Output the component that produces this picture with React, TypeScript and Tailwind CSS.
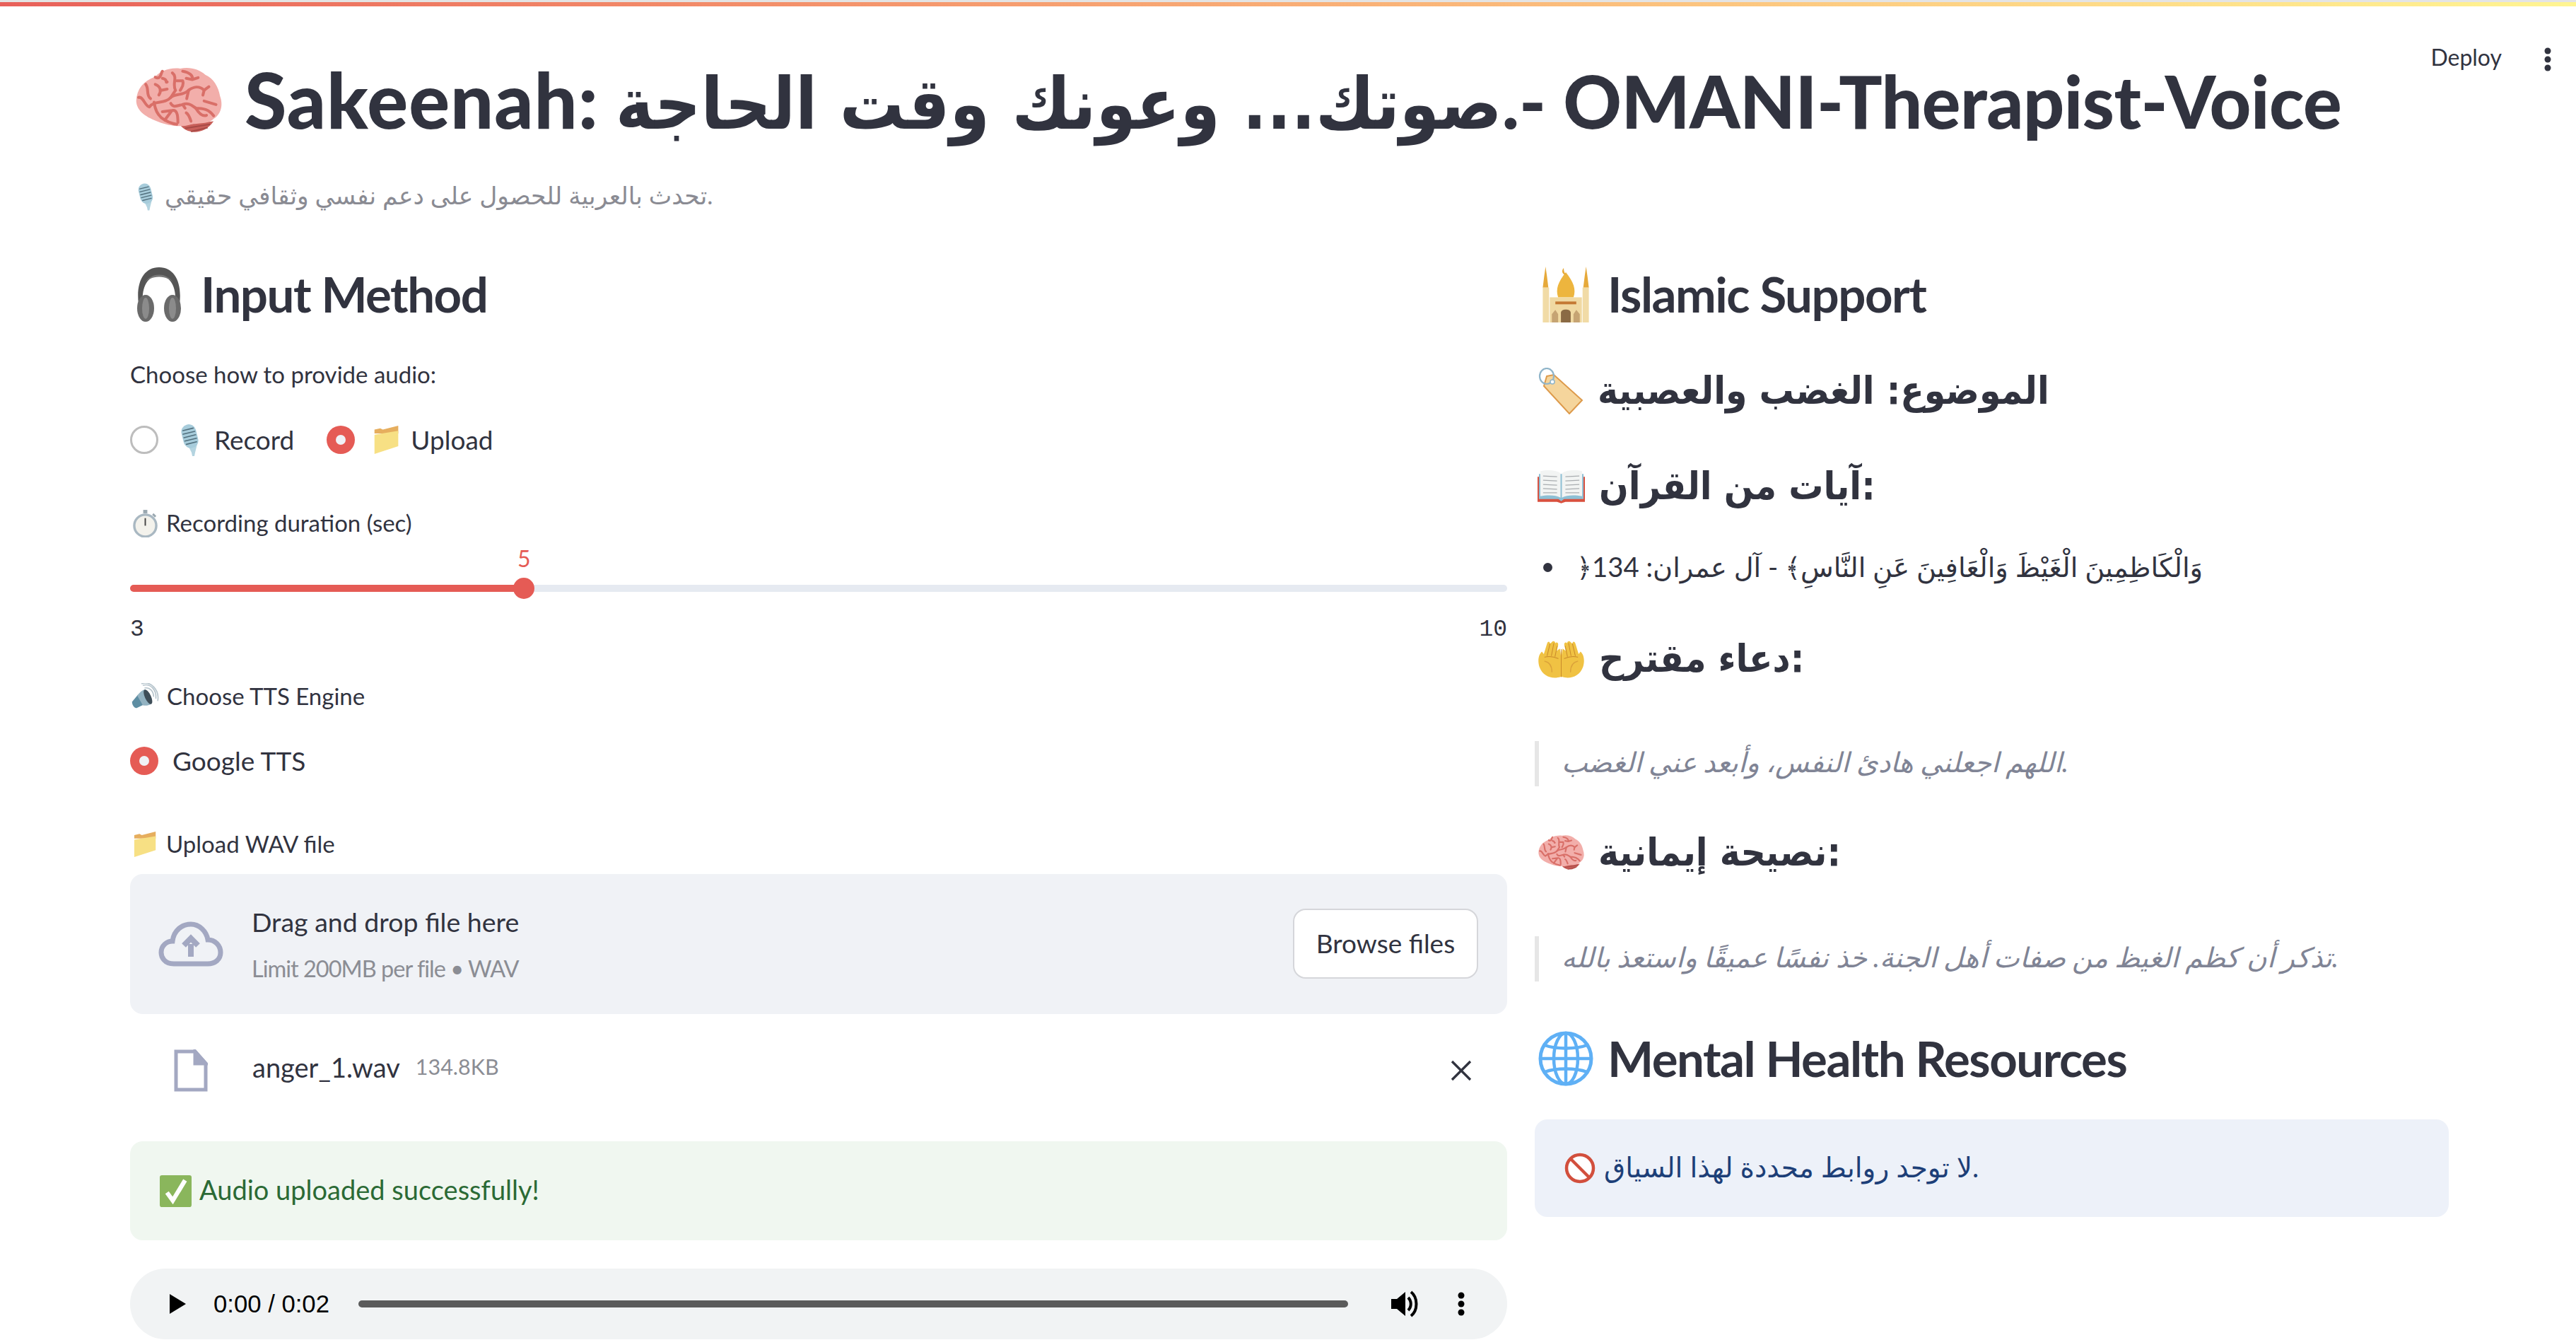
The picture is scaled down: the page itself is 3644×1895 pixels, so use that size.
const BrainIcon = ({ className }: { className: string }) => (
    <svg viewBox="18 28 362 282" className={className}>
        <path d="M205 270 C225 305 300 320 345 255Z" fill="#c9605a" />
        <path d="M225 285 L330 268 M250 298 L320 282" stroke="#a84a46" strokeWidth="6" />
        <path d="M20 170 C22 120 50 85 100 68 C120 45 160 28 205 34 C240 25 285 35 310 60 C345 75 365 110 372 150 C385 185 378 225 345 245 C320 270 270 262 245 270 C205 282 150 272 115 258 C65 240 22 215 20 170Z" fill="#f2aeaa" />
        <g fill="none" stroke="#d96f68" strokeWidth="12" strokeLinecap="round" strokeLinejoin="round">
            <path d="M30 155 C50 150 55 190 75 195 C95 165 140 185 165 155 C190 135 215 150 240 125 C260 110 285 105 305 125 L325 110" />
            <path d="M60 100 C75 120 60 145 80 160" />
            <path d="M100 70 C125 85 125 45 130 45 M130 75 C155 80 140 95 150 90" />
            <path d="M100 100 C125 110 125 130 115 145 M125 125 L150 120" />
            <path d="M172 52 C195 70 170 100 185 125 L165 155 M190 85 L215 85 C222 105 210 115 205 125" />
            <path d="M215 45 C245 50 260 65 255 80 L280 72 M230 75 L255 80" />
            <path d="M240 125 L232 160 M305 125 L300 145 M305 170 L355 185" />
            <path d="M95 175 C100 210 110 225 125 240 C145 255 170 265 190 268" />
            <path d="M165 180 C175 200 190 190 215 185 C240 175 255 190 270 200 C300 200 325 205 345 232" />
            <path d="M130 215 L170 210 C190 205 195 225 195 260 M215 185 L225 200 M170 210 L140 250" />
            <path d="M230 220 C240 225 245 240 250 255 M270 200 C285 225 300 235 315 230" />
        </g>
    </svg>
);

const MicIcon = ({ className }: { className: string }) => (
    <svg viewBox="0 0 32 45" className={className}>
        <path d="M14 30 L27 28 L24 40 L23 45 L20 45 L19 40Z" fill="#b4d4e0" />
        <g transform="rotate(-14 16 17)">
            <rect x="6" y="0" width="21" height="34" rx="10.5" fill="#a7ccdb" />
            <g stroke="#52707e" strokeWidth="1.6" strokeLinecap="round">
                <path d="M9 7 L24 7 M8 12 L25 12 M8 17 L25 17 M8 22 L25 22 M9 27 L24 27" />
            </g>
        </g>
    </svg>
);

const HeadphonesIcon = ({ className }: { className: string }) => (
    <svg viewBox="0 0 70 77" className={className}>
        <path d="M6 52 C2 20 14 0 35 0 C56 0 68 20 64 52 L58 52 C60 26 50 12 35 12 C20 12 10 26 12 52Z" fill="#555" />
        <path d="M14 24 C20 10 50 10 56 24 C48 6 22 6 14 24Z" fill="#777" />
        <ellipse cx="16" cy="58" rx="12" ry="19" fill="#6a6a6a" />
        <ellipse cx="54" cy="58" rx="12" ry="19" fill="#6a6a6a" />
        <ellipse cx="16" cy="58" rx="5" ry="15" fill="#8b8b8b" />
        <ellipse cx="54" cy="58" rx="5" ry="15" fill="#8b8b8b" />
    </svg>
);

const FolderIcon = ({ className }: { className: string }) => (
    <svg viewBox="0 0 40 44" className={className}>
        <path d="M1 12 L1 6 L10 4 L14 6 L38 0 L38 12Z" fill="#e6ae5e" />
        <path d="M1 44 L1 14 L38 8 L38 32Z" fill="#f7e084" />
    </svg>
);

const TimerIcon = ({ className }: { className: string }) => (
    <svg viewBox="0 0 36 40" className={className}>
        <rect x="15" y="0" width="6" height="5" fill="#9aa8b0" />
        <circle cx="18" cy="23" r="16" fill="#f3f2ec" stroke="#a9b8c2" strokeWidth="3.5" />
        <path d="M18 12 L18 23" stroke="#444" strokeWidth="2" />
        <path d="M29 6 L33 10" stroke="#9aa8b0" strokeWidth="3" />
    </svg>
);

const SpeakerIcon = ({ className }: { className: string }) => (
    <svg viewBox="18 15 117 115" className={className}>
        <path d="M20 95 L45 65 L68 108 L40 122 C30 122 20 110 20 95Z" fill="#5e8ea3" />
        <path d="M42 68 C55 52 68 42 78 42 L100 105 C90 112 78 112 66 110Z" fill="#93b3c2" />
        <ellipse cx="88" cy="74" rx="13" ry="34" transform="rotate(-25 88 74)" fill="#3e4e58" />
        <g fill="none" stroke="#b6c4cc" strokeWidth="5" strokeLinecap="round">
            <path d="M75 36 C95 32 112 50 112 72" />
            <path d="M68 24 C100 16 125 45 122 80" />
            <path d="M62 17 C100 5 138 45 130 90" />
        </g>
    </svg>
);

const CheckIcon = ({ className }: { className: string }) => (
    <svg viewBox="0 0 44 44" className={className}>
        <rect x="0" y="0" width="44" height="44" rx="3" fill="#8ab65c" />
        <path d="M10 24 L18 35 L35 7" fill="none" stroke="#fff" strokeWidth="6" />
    </svg>
);

const MosqueIcon = ({ className }: { className: string }) => (
    <svg viewBox="0 0 70 80" className={className}>
        <path d="M2 30 L4 14 L6 0 L8 14 L10 30Z M60 30 L62 14 L64 0 L66 14 L68 30Z" fill="#e6a93a" />
        <rect x="2" y="30" width="9" height="50" fill="#f1dba6" />
        <rect x="59" y="30" width="9" height="50" fill="#f1dba6" />
        <path d="M35 8 C46 22 50 32 46 44 L24 44 C20 32 24 22 35 8Z" fill="#edb53e" />
        <path d="M32 2 C28 6 30 12 36 12 C33 10 32 6 32 2Z" fill="#e6a93a" />
        <rect x="12" y="44" width="46" height="36" fill="#f0d9a2" />
        <rect x="20" y="50" width="30" height="4" fill="#c47a34" />
        <path d="M28 80 L28 66 C28 60 42 60 42 66 L42 80Z" fill="#8a6a44" />
        <path d="M15 80 L15 68 L20 62 L24 68 L24 80Z M46 80 L46 68 L50 62 L55 68 L55 80Z" fill="#c6a473" />
    </svg>
);

const TagIcon = ({ className }: { className: string }) => (
    <svg viewBox="0 0 64 66" className={className}>
        <path d="M12 12 L22 10 L62 46 L44 65 L8 26Z" fill="#f5d59c" stroke="#dd9a4b" strokeWidth="2" />
        <ellipse cx="12" cy="12" rx="10" ry="11" fill="none" stroke="#8fb4c9" strokeWidth="2.2" />
        <circle cx="20" cy="20" r="3" fill="#fff" stroke="#8fb4c9" strokeWidth="1.5" />
    </svg>
);

const BookIcon = ({ className }: { className: string }) => (
    <svg viewBox="0 0 68 48" className={className}>
        <path d="M0 10 L0 46 L28 46 L34 48 L40 46 L68 46 L68 10Z" fill="#d9513f" />
        <path d="M2 6 L2 42 L30 42 L34 45 L38 42 L66 42 L66 6Z" fill="#8dbfd4" />
        <path d="M4 2 C14 0 26 0 33 5 L33 40 C26 36 14 36 4 38Z" fill="#f2f4f3" />
        <path d="M64 2 C54 0 42 0 35 5 L35 40 C42 36 54 36 64 38Z" fill="#f2f4f3" />
        <g stroke="#a9adb0" strokeWidth="1.3">
            <path d="M8 9 L28 10 M8 15 L28 16 M8 21 L28 22 M8 27 L28 28 M8 33 L28 33" />
            <path d="M40 10 L60 9 M40 16 L60 15 M40 22 L60 21 M40 28 L60 27 M40 33 L60 33" />
        </g>
    </svg>
);

const HandsIcon = ({ className }: { className: string }) => (
    <svg viewBox="33 26 196 160" className={className}>
        <path d="M130 180 C95 192 55 180 40 140 C30 110 38 85 50 75 L58 85 L72 40 C76 30 84 32 84 42 L92 35 C96 28 106 30 106 40 C112 32 120 38 118 48 L112 72 L125 62 C132 90 132 140 130 180Z" fill="#f0c243" />
        <path d="M132 180 C167 192 207 180 222 140 C232 110 224 85 212 75 L204 85 L190 40 C186 30 178 32 178 42 L170 35 C166 28 156 30 156 40 C150 32 142 38 144 48 L150 72 L137 62 C130 90 130 140 132 180Z" fill="#f0c243" />
        <g fill="none" stroke="#c98a2b" strokeWidth="3" strokeLinecap="round">
            <path d="M72 92 L84 42 M90 92 L100 40 M105 95 L114 52 M62 98 C80 94 100 96 118 104" />
            <path d="M190 92 L178 42 M172 92 L162 40 M157 95 L148 52 M200 98 C182 94 162 96 144 104" />
            <path d="M131 66 L131 180" />
        </g>
        <g fill="none" stroke="#dba23a" strokeWidth="4" strokeLinecap="round">
            <path d="M62 115 C85 120 92 140 92 160 M200 115 C177 120 170 140 170 160" />
        </g>
    </svg>
);

const GlobeIcon = ({ className }: { className: string }) => (
    <svg viewBox="0 0 78 78" className={className}>
        <circle cx="39" cy="39" r="36" fill="#fff" stroke="#5fb0f5" strokeWidth="5" />
        <g fill="none" stroke="#5fb0f5" strokeWidth="4.5">
            <ellipse cx="39" cy="39" rx="17" ry="36" />
            <path d="M39 3 L39 75 M3 39 L75 39" />
            <path d="M9 20 C25 26 53 26 69 20 M9 58 C25 52 53 52 69 58" />
        </g>
    </svg>
);

const NoEntryIcon = ({ className }: { className: string }) => (
    <svg viewBox="0 0 44 44" className={className}>
        <circle cx="22" cy="22" r="19" fill="#fff" stroke="#d24f3d" strokeWidth="4.5" />
        <path d="M9 9 L35 35" stroke="#d24f3d" strokeWidth="4.5" />
    </svg>
);

const Radio = ({ on }: { on: boolean }) =>
    on ? (
        <div className="flex size-[40px] shrink-0 items-center justify-center rounded-full bg-[#e55b55]">
            <div className="size-[14px] rounded-full bg-[#f0f2f6]" />
        </div>
    ) : (
        <div className="size-[40px] shrink-0 rounded-full border-[3px] border-[#bdbdbd] bg-white" />
    );

const Label = ({ children, className = "" }: { children: React.ReactNode; className?: string }) => (
    <div className={`flex h-[40px] items-center text-[33px] text-[#31333f] ${className}`}>
        {children}
    </div>
);

const H2 = ({ children, className = "" }: { children: React.ReactNode; className?: string }) => (
    <h2 className={`flex h-[90px] -translate-y-[2px] items-center text-[69px] font-bold tracking-[-1.5px] text-[#31333f] ${className}`}>
        {children}
    </h2>
);

const H3 = ({ children, className = "" }: { children: React.ReactNode; className?: string }) => (
    <h3 className={`flex h-[80px] items-center gap-[20px] font-['DejaVu_Sans_Condensed','DejaVu_Sans',sans-serif] text-[54.5px] font-bold text-[#31333f] ${className}`}>
        {children}
    </h3>
);

const Quote = ({ children, className = "" }: { children: React.ReactNode; className?: string }) => (
    <blockquote className={`flex h-[64px] items-center border-l-[6px] border-[#e6e6e6] pl-[32px] text-[39px] italic text-[#808495] ${className}`}>
        <span className="-translate-y-[3px]">{children}</span>
    </blockquote>
);

export default function App() {
    return (
        <div className="relative h-[1895px] w-full overflow-hidden bg-white font-['Lato','DejaVu_Sans',sans-serif] text-[#31333f]">
            <div className="h-[3px] bg-[#e4e4e4]" />
            <div className="h-[6px] bg-gradient-to-r from-[#e8605a] to-[#fff592]" />

            <div className="absolute right-[35px] top-[60px] flex items-center gap-[60px]">
                <span className="-translate-y-[3px] text-[32px]">Deploy</span>
                <svg viewBox="0 0 10 34" className="h-[34px] w-[10px]" fill="#31333f">
                    <circle cx="5" cy="5" r="4.5" />
                    <circle cx="5" cy="17" r="4.5" />
                    <circle cx="5" cy="29" r="4.5" />
                </svg>
            </div>

            <main className="px-[184px]">
                <h1 className="mt-[80px] flex h-[110px] items-center pl-[8px] text-[102px] font-black">
                    <BrainIcon className="h-[95px] w-[122px] shrink-0 -translate-y-[2px]" />
                    <span className="ml-[32px] -translate-y-[3px] whitespace-nowrap tracking-[-0.5px]">
                        <span className="text-[108px] tracking-[1px]">Sakeenah:</span>{" "}
                        <span className="font-['DejaVu_Sans_Condensed','DejaVu_Sans',sans-serif] text-[101px] font-bold tracking-normal">صوتك... وعونك وقت الحاجة</span>
                        .- OMANI-Therapist-Voice
                    </span>
                </h1>
                <p className="mt-[54px] flex h-[50px] items-center gap-[14px] pl-[8px] text-[34.5px] text-[#8a8b93]">
                    <MicIcon className="h-[39px] w-[27px]" />
                    <span className="-translate-y-[2px]">تحدث بالعربية للحصول على دعم نفسي وثقافي حقيقي.</span>
                </p>

                <div className="mt-[70px] flex gap-[39px]">
                    <section className="w-[1948px] shrink-0">
                        <H2 className="gap-[20px] pl-[2px]">
                            <HeadphonesIcon className="h-[77px] w-[78px]" />
                            Input Method
                        </H2>

                        <Label className="mt-[47px]">Choose how to provide audio:</Label>

                        <div className="mt-[52px] flex h-[40px] items-center text-[37px]">
                            <Radio on={false} />
                            <MicIcon className="ml-[28px] h-[45px] w-[32px]" />
                            <span className="ml-[19px]">Record</span>
                            <div className="ml-[46px]">
                                <Radio on />
                            </div>
                            <FolderIcon className="ml-[25px] h-[40px] w-[40px]" />
                            <span className="ml-[14px]">Upload</span>
                        </div>

                        <Label className="mt-[78px] gap-[12px] pl-[4px] text-[33.5px]">
                            <TimerIcon className="h-[39px] w-[35px]" />
                            Recording duration (sec)
                        </Label>

                        <div className="mt-[10px] h-[139px]">
                            <div className="flex h-[40px] items-center pl-[548px] text-[32px] text-[#e55b55]">5</div>
                            <div className="mt-[7px] flex h-[30px] items-center">
                                <div className="h-[10px] w-[557px] rounded-l-full bg-[#e55b55]" />
                                <div className="relative -mx-[15px] size-[30px] shrink-0 rounded-full bg-[#e55b55]" />
                                <div className="h-[10px] flex-1 rounded-r-full bg-[#e6eaf1]" />
                            </div>
                            <div className="mt-[24px] flex h-[40px] items-center justify-between font-['Liberation_Mono',monospace] text-[33px]">
                                <span>3</span>
                                <span>10</span>
                            </div>
                        </div>

                        <Label className="mt-[56px] gap-[11px] pl-[2px] text-[32.5px]">
                            <SpeakerIcon className="h-[38px] w-[39px]" />
                            Choose TTS Engine
                        </Label>

                        <div className="mt-[51px] flex h-[40px] items-center gap-[20px] text-[37px]">
                            <Radio on />
                            Google TTS
                        </div>

                        <Label className="mt-[78px] gap-[12px] pl-[4px] text-[32px]">
                            <FolderIcon className="h-[36px] w-[35px]" />
                            Upload WAV file
                        </Label>

                        <div className="mt-[22px] flex h-[198px] items-center rounded-[18px] bg-[#f0f2f6] pl-[40px] pr-[41px]">
                            <svg viewBox="0 0 92 64" className="h-[64px] w-[92px] shrink-0" fill="none" stroke="#a3a8c2" strokeWidth="7">
                                <path d="M22 60 C8 60 4 50 4 44 C4 34 12 28 20 28 C22 12 34 4 46 4 C58 4 68 14 70 26 C80 26 88 34 88 44 C88 54 80 60 70 60Z" />
                                <path d="M46 50 L46 32 M36 34 L46 24 L56 34" strokeWidth="8" />
                            </svg>
                            <div className="ml-[40px] flex-1">
                                <div className="text-[37.5px]">Drag and drop file here</div>
                                <div className="mt-[14px] text-[32.5px] tracking-[-1px] text-[#8b8d94]">Limit 200MB per file • WAV</div>
                            </div>
                            <button className="h-[99px] w-[262px] -translate-y-[1px] rounded-[18px] border-2 border-[#d5d6da] bg-white text-[37px]">
                                Browse files
                            </button>
                        </div>

                        <div className="mt-[50px] flex h-[60px] items-center pl-[62px] pr-[50px]">
                            <svg viewBox="0 0 48 60" className="h-[60px] w-[48px] shrink-0" fill="none" stroke="#a3a8c2" strokeWidth="5">
                                <path d="M3 3 L30 3 L45 20 L45 57 L3 57Z" />
                                <path d="M30 3 L30 20 L45 20Z" fill="#a3a8c2" />
                            </svg>
                            <span className="ml-[63px] -translate-y-[5px] text-[38px]">anger_1.wav</span>
                            <span className="ml-[22px] -translate-y-[5px] text-[30.5px] text-[#8b8d94]">134.8KB</span>
                            <svg viewBox="0 0 30 30" className="ml-auto h-[30px] w-[30px]" stroke="#31333f" strokeWidth="3.4">
                                <path d="M2 2 L28 28 M28 2 L2 28" />
                            </svg>
                        </div>

                        <div className="mt-[70px] flex h-[140px] items-center gap-[11px] rounded-[18px] bg-[#f0f7f0] pl-[42px] text-[38px] text-[#2b6a35]">
                            <CheckIcon className="size-[45px]" />
                            <span className="-translate-y-[2px]">Audio uploaded successfully!</span>
                        </div>

                        <div className="mt-[40px] flex h-[100px] items-center rounded-full bg-[#f1f3f4] pl-[56px] pr-[60px] font-['Liberation_Sans',sans-serif] text-black">
                            <svg viewBox="0 0 23 28" className="h-[28px] w-[23px]" fill="#000">
                                <path d="M0 0 L23 14 L0 28Z" />
                            </svg>
                            <span className="ml-[39px] text-[34.7px]">0:00 / 0:02</span>
                            <div className="ml-[41px] h-[10px] w-[1400px] rounded-full bg-[#5b5b5b]" />
                            <svg viewBox="0 0 38 38" className="ml-[61px] h-[38px] w-[38px]" fill="#000">
                                <path d="M0 12 L8 12 L20 2 L20 36 L8 26 L0 26Z" />
                                <path d="M24 10 C29 15 29 23 24 28" fill="none" stroke="#000" strokeWidth="4" />
                                <path d="M28 2 C38 10 38 28 28 36" fill="none" stroke="#000" strokeWidth="4" />
                            </svg>
                            <svg viewBox="0 0 10 34" className="ml-[56px] h-[34px] w-[10px]" fill="#000">
                                <circle cx="5" cy="5" r="4.5" />
                                <circle cx="5" cy="17" r="4.5" />
                                <circle cx="5" cy="29" r="4.5" />
                            </svg>
                        </div>
                    </section>

                    <section className="w-[1293px] shrink-0">
                        <H2 className="gap-[24px] pl-[9px] tracking-[-0.5px]">
                            <MosqueIcon className="h-[79px] w-[70px]" />
                            Islamic Support
                        </H2>

                        <H3 className="mt-[50px] pl-[5px]">
                            <TagIcon className="h-[66px] w-[64px]" />
                            <span>الموضوع: الغضب والعصبية</span>
                        </H3>
                        <H3 className="mt-[55px] pl-[4px]">
                            <BookIcon className="h-[48px] w-[67px]" />
                            <span>آيات من القرآن:</span>
                        </H3>

                        <ul className="mt-[49px] flex h-[50px] items-center pl-[12px] text-[38.3px]">
                            <li className="flex items-center">
                                <span className="size-[13px] rounded-full bg-[#31333f]" />
                                <span className="ml-[34px]">﴿وَالْكَاظِمِينَ الْغَيْظَ وَالْعَافِينَ عَنِ النَّاسِ﴾ - آل عمران: 134</span>
                            </li>
                        </ul>

                        <H3 className="mt-[65px] pl-[4px]">
                            <HandsIcon className="h-[54px] w-[67px]" />
                            <span>دعاء مقترح:</span>
                        </H3>

                        <Quote className="mt-[76px]">اللهم اجعلني هادئ النفس، وأبعد عني الغضب.</Quote>

                        <H3 className="mt-[54px] pl-[5px]">
                            <BrainIcon className="h-[52px] w-[65px]" />
                            <span>نصيحة إيمانية:</span>
                        </H3>

                        <Quote className="mt-[78px]">تذكر أن كظم الغيظ من صفات أهل الجنة. خذ نفسًا عميقًا واستعذ بالله.</Quote>

                        <H2 className="mt-[66px] gap-[20px] pl-[5px]">
                            <GlobeIcon className="size-[78px]" />
                            Mental Health Resources
                        </H2>

                        <div className="mt-[39px] flex h-[138px] items-center gap-[12px] rounded-[18px] bg-[#edf1f9] pl-[42px] text-[39px] text-[#1d3f78]">
                            <NoEntryIcon className="size-[44px]" />
                            <span className="-translate-y-[2px]">لا توجد روابط محددة لهذا السياق.</span>
                        </div>
                    </section>
                </div>
            </main>
        </div>
    );
}
